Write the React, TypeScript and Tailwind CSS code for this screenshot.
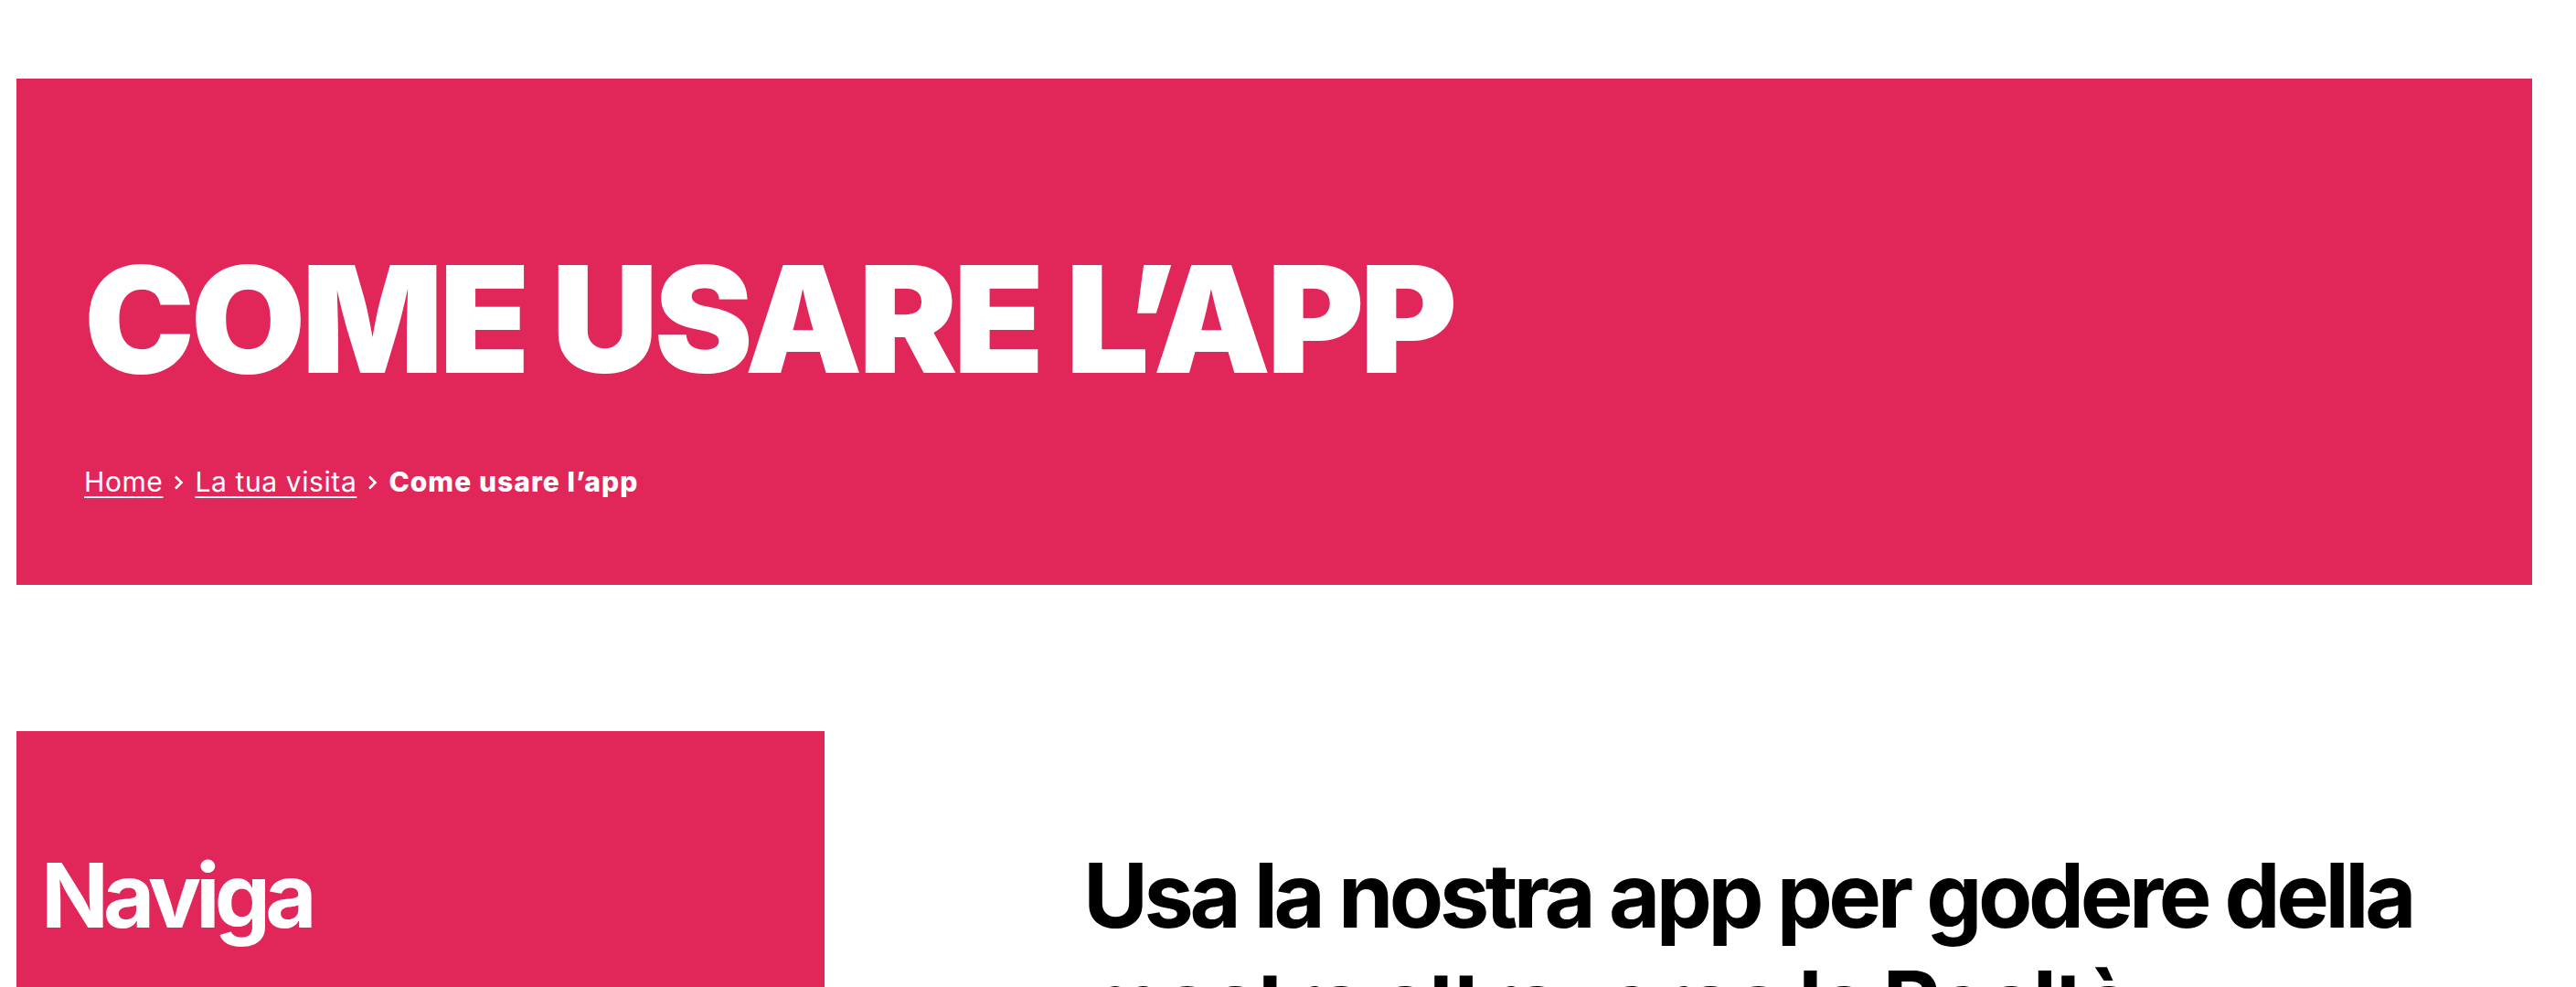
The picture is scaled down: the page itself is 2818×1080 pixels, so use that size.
const PINK = 'bg-[#e12759]';

function Chevron() {
  return (
    <svg width="11" height="16" viewBox="0 0 11 16" className="shrink-0 mt-[1px]" aria-hidden="true">
      <path d="M2 1.5 L8.5 8 L2 14.5" fill="none" stroke="white" strokeWidth="2.6" />
    </svg>
  );
}

function Banner() {
  return (
    <section className={`${PINK} ml-[18px] mr-[48px] mt-[86px] pl-[74px] pt-[182px] pb-[98px] text-white`}>
      <h1 className="font-['Inter',sans-serif] font-black text-[162px] leading-none tracking-[-0.027em]">
        COME USARE L’APP
      </h1>
      <nav className="mt-[82px] flex items-center gap-[12px] font-['Inter',sans-serif] text-[30px] leading-none tracking-[0.02em]">
        <a href="#" className="underline decoration-2 underline-offset-[5px]">Home</a>
        <Chevron />
        <a href="#" className="underline decoration-2 underline-offset-[5px]">La tua visita</a>
        <Chevron />
        <span className="font-extrabold tracking-[0.035em]">Come usare l’app</span>
      </nav>
    </section>
  );
}

export default function App() {
  return (
    <div className="min-h-screen bg-white overflow-hidden">
      <Banner />
      <div className="mt-[160px] ml-[18px] mr-[48px] flex">
        <aside className={`${PINK} w-[884px] shrink-0 h-[700px] pl-[27px] pt-[131px]`}>
          <h2 className="font-['Inter',sans-serif] font-bold text-[97px] leading-none tracking-[-0.06em] text-white">
            Naviga
          </h2>
        </aside>
        <main className="flex-1 pl-[283px] pt-[121px]">
          <h2 className="font-['Inter',sans-serif] font-bold text-[97px] leading-[118px] tracking-[-0.046em] text-black">
            Usa la nostra app per godere della mostra attraverso la Realtà Aumentata
          </h2>
        </main>
      </div>
    </div>
  );
}
